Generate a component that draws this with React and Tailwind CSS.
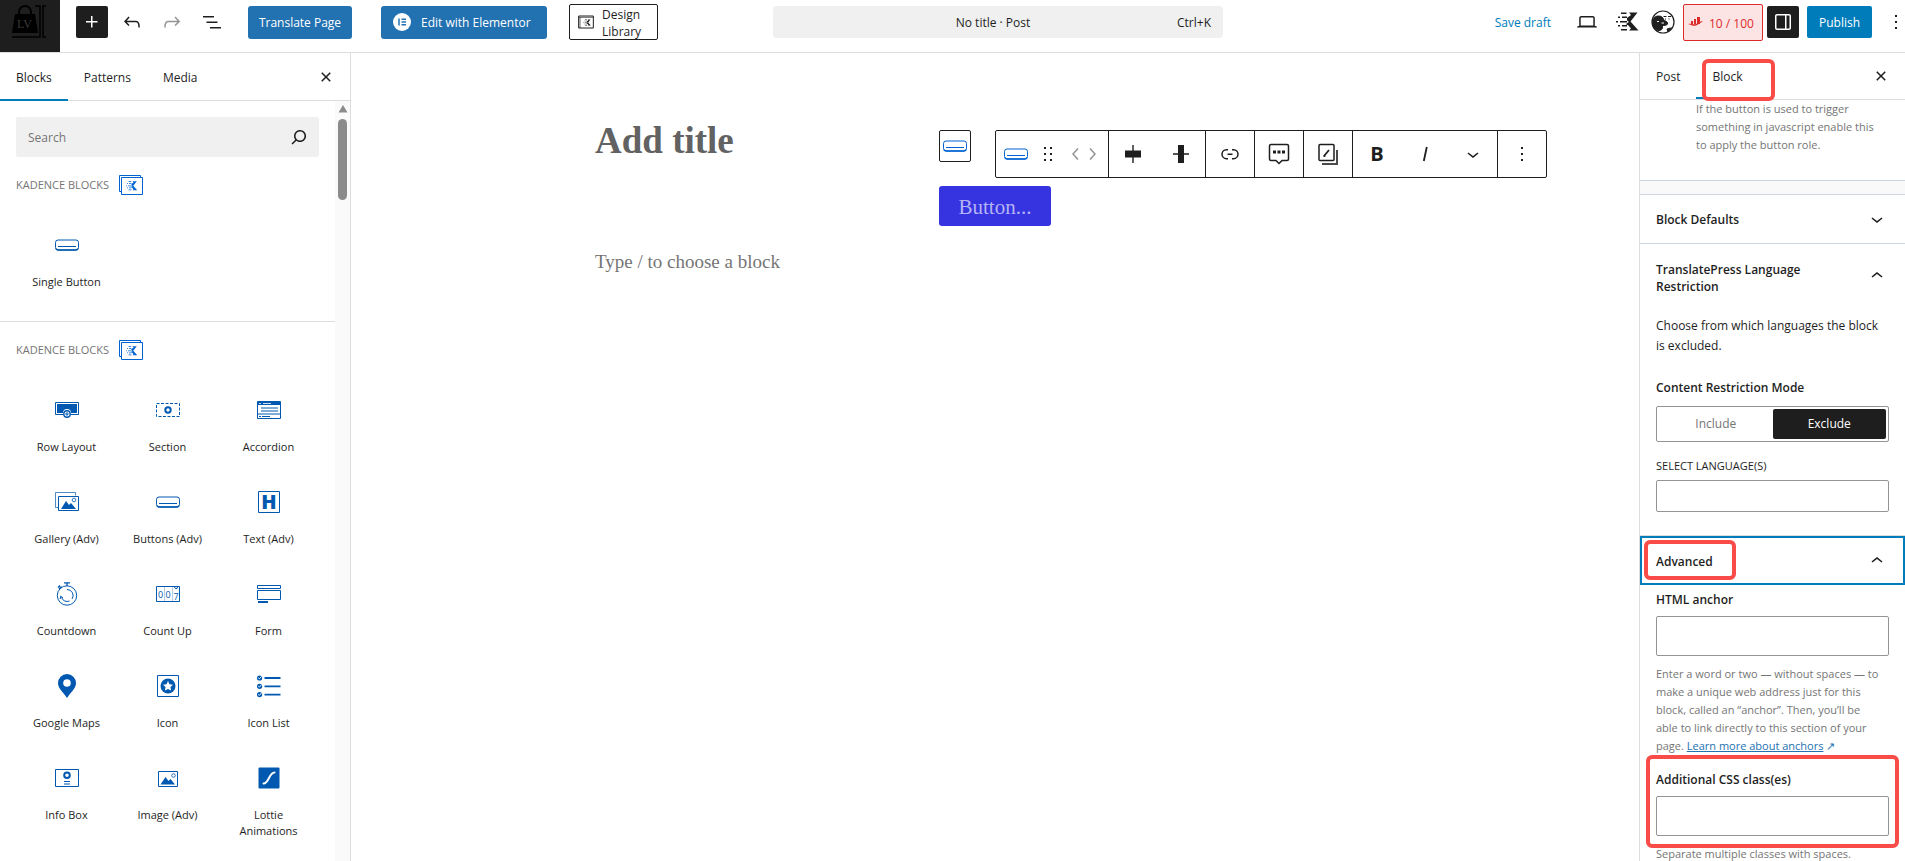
import { useState } from 'react';

const paths = {
  plus: 'M11 12.5V17.5H12.5V12.5H17.5V11H12.5V6H11V11H6V12.5H11Z',
  undo: 'M18.3 11.7c-.6-.6-1.4-.9-2.3-.9H6.7l2.9-3.3-1.1-1-4.5 5L8.5 16l1-1-2.7-2.7H16c.5 0 .9.2 1.3.5 1 1 1 3.4 1 4.5v.3h1.5v-.2c0-1.5 0-4.3-1.5-5.7z',
  redo: 'M15.6 6.5l-1.1 1 2.9 3.3H8c-.9 0-1.7.3-2.3.9-1.4 1.5-1.4 4.2-1.4 5.6v.2h1.5v-.3c0-1.1 0-3.5 1-4.5.3-.3.7-.5 1.3-.5h9.2L14.5 15l1.1 1.1 4.6-4.6-4.6-5z',
  list: 'M3 6h11v1.5H3V6Zm3.5 5.5h11V13h-11v-1.5ZM21 17H10v1.5h11V17Z',
  close: 'M12 13.06l3.712 3.713 1.061-1.06L13.061 12l3.712-3.712-1.06-1.06L12 10.938 8.288 7.227l-1.061 1.06L10.939 12l-3.712 3.712 1.06 1.061L12 13.061z',
  search: 'M13 5c-3.3 0-6 2.7-6 6 0 1.4.5 2.7 1.3 3.7l-3.8 3.8 1.1 1.1 3.8-3.8c1 .8 2.3 1.3 3.7 1.3 3.3 0 6-2.7 6-6S16.3 5 13 5zm0 10.5c-2.5 0-4.5-2-4.5-4.5s2-4.5 4.5-4.5 4.5 2 4.5 4.5-2 4.5-4.5 4.5z',
  more: 'M13 19h-2v-2h2v2zm0-6h-2v-2h2v2zm0-6h-2V5h2v2z',
  down: 'M17.5 11.6L12 16l-5.5-4.4.9-1.2L12 14l4.5-3.6 1 1.2z',
  up: 'M6.5 12.4L12 8l5.5 4.4-.9 1.2L12 10l-4.5 3.6-1-1.2z',
  left: 'M14.6 7l-1.2-1L8 12l5.4 6 1.2-1-4.6-5z',
  right: 'M10.6 6L9.4 7l4.6 5-4.6 5 1.2 1 5.4-6z',
  drag: 'M8 7h2V5H8v2zm0 6h2v-2H8v2zm0 6h2v-2H8v2zm6-14v2h2V5h-2zm0 8h2v-2h-2v2zm0 6h2v-2h-2v2z',
  link: 'M10 17.389H8.444A5.194 5.194 0 1 1 8.444 7H10v1.5H8.444a3.694 3.694 0 0 0 0 7.389H10v1.5ZM14 7h1.556a5.194 5.194 0 0 1 0 10.39H14v-1.5h1.556a3.694 3.694 0 0 0 0-7.39H14V7Zm-4.5 6h5v-1.5h-5V13Z',
  drawer: 'M18 4H6c-1.1 0-2 .9-2 2v12c0 1.1.9 2 2 2h12c1.1 0 2-.9 2-2V6c0-1.1-.9-2-2-2zm-4 14.5H6c-.3 0-.5-.2-.5-.5V6c0-.3.2-.5.5-.5h8v13zm4.5-.5c0 .3-.2.5-.5.5h-2.5v-13H18c.3 0 .5.2.5.5v12z',
  laptop: 'M20.5 16h-.7V8c0-1.1-.9-2-2-2H6.2c-1.1 0-2 .9-2 2v8h-.7c-.8 0-1.5.7-1.5 1.5h20c0-.8-.7-1.5-1.5-1.5zM5.7 8c0-.3.2-.5.5-.5h11.6c.3 0 .5.2.5.5v7.6H5.7V8z',
  alignMiddle: 'M4 8.5h7.3V3h1.4v5.5H20v7h-7.3V21h-1.4v-5.5H4z',
  alignStretch: 'M9 3h6v8.3h5v1.4h-5V21H9v-8.3H4v-1.4h5z',
};

const Icon = ({ name, className = 'size-6' }) => (
  <svg viewBox="0 0 24 24" fill="currentColor" className={`shrink-0 ${className}`} aria-hidden="true">
    <path d={paths[name]} />
  </svg>
);

const Svg = ({ children, className = 'size-6', ...rest }) => (
  <svg viewBox="0 0 24 24" fill="none" stroke="currentColor" className={`shrink-0 overflow-visible ${className}`} aria-hidden="true" {...rest}>
    {children}
  </svg>
);

const KadenceMark = () => (
  <g fill="currentColor" stroke="none">
    <path d="M14 2.500h8.500L15.500 11.500 23.500 20.500H14l2-2-3-3.500h-1.500v-1.500l2.500-1.500-2-1.500V8l4-3z" />
    <path d="M6 2.500h5.500V4H6zM3 6.500h2V8H3zM7 6.500h5V8H7zM1 11h2v1.500H1zM5 11h7v1.500H5zM3 15h2v1.500H3zM7 15h5v1.500H7zM6 19h6v1.500H6z" />
  </g>
);

const KadenceIcon = () => (
  <Svg className="size-6 text-[#0063d1]">
    <path d="M2.5 18.5h-2v-16h21v2" />
    <path d="M2.5 4.5h21v17h-21z" />
    <svg x="6" y="7" width="13" height="12" viewBox="0 0 24 24"><KadenceMark /></svg>
  </Svg>
);

const ButtonIcon = ({ className }) => (
  <Svg className={className}>
    <rect x=".5" y="7" width="23" height="10" rx="2.5" />
    <path d="M1 15.5c.4 1.2 1.200 1.500 2.500 1.500h17c1.300 0 2.100-.3 2.500-1.500" strokeWidth="1.500" />
    <path d="M3 13.500h18" />
  </Svg>
);

const blockIcons = {
  row: (
    <Svg>
      <path d="M.5 4.500h23v12h-23z" />
      <path d="M2 6h20v9h-6a4 4 0 0 0-8 0H2z" fill="currentColor" stroke="none" />
      <circle cx="12" cy="16" r="3.200" strokeWidth="1.400" fill="white" />
      <path d="M12 14.200v3.600M10.200 16h3.600" />
    </Svg>
  ),
  section: (
    <Svg>
      <rect x=".5" y="5.500" width="23" height="13" strokeDasharray="3 1.500" />
      <circle cx="12" cy="12" r="2.700" strokeWidth="2" />
    </Svg>
  ),
  accordion: (
    <Svg>
      <path d="M.5 3.500h23v17H.5zM.5 16h23" />
      <path d="M1 4h22v3H1z" fill="currentColor" stroke="none" />
      <path d="M2 5.500h2M6 5.500h8" stroke="white" strokeWidth=".8" />
      <path d="M4 10h17M4 13h17M2 18.500h2M5 18.500h8" />
    </Svg>
  ),
  gallery: (
    <Svg>
      <path d="M3 17.500H.5v-15h20v3" opacity=".7" />
      <path d="M3.500 6.500h20v14h-20z" />
      <path d="M6 19l5-8 3 4 2-2 5 6z" fill="currentColor" stroke="none" />
      <circle cx="19" cy="10" r="1.800" strokeWidth=".8" />
    </Svg>
  ),
  buttons: <ButtonIcon />,
  text: (
    <Svg>
      <path d="M1.500 1.500h21v21h-21z" />
      <text x="12" y="19" textAnchor="middle" fill="currentColor" stroke="none" className="text-[20px] font-extrabold">H</text>
    </Svg>
  ),
  countdown: (
    <Svg>
      <circle cx="12" cy="13.500" r="9.700" />
      <path d="M9 .8h6M12 1v3M3 5.500l2-2M4 7l2.500-2.500" strokeWidth="1.300" />
      <path d="M12 7.500a6 6 0 0 1 5 9.500M6.500 15.500a6 6 0 0 0 8 3.500" />
      <path d="M5.200 17l.5-2.800 2.300 1.600" />
    </Svg>
  ),
  countup: (
    <Svg>
      <path d="M.5 4.500h23v15H.5z" />
      <path d="M8.500 5v14M16.500 5v14" opacity=".3" />
      <path d="M18.500 5l1 1.500h1.500l.5-1.500" />
      <g fill="currentColor" stroke="none" className="text-[9px]">
        <text x="2" y="15.500">0</text>
        <text x="9.500" y="15.500">0</text>
        <text x="17.500" y="18">7</text>
      </g>
    </Svg>
  ),
  form: (
    <Svg>
      <path d="M.5 3.500h23v3H.5zM.5 8.500h23v9H.5z" />
      <path d="M1 20h10" strokeWidth="2" />
    </Svg>
  ),
  maps: (
    <Svg>
      <path fillRule="evenodd" fill="currentColor" stroke="none" d="M12 0a9 9 0 0 0-9 9c0 6 5.500 9 9 15 3.500-6 9-9 9-15a9 9 0 0 0-9-9zm0 5.200a3.800 3.800 0 1 1 0 7.600 3.800 3.800 0 0 1 0-7.600z" />
    </Svg>
  ),
  icon: (
    <Svg>
      <path d="M1.500 1.500h21v21h-21z" />
      <circle cx="12" cy="12" r="7.500" fill="currentColor" stroke="none" />
      <path d="M12 7l1.500 3.200 3.500.5-2.500 2.400.6 3.400-3.100-1.600-3.100 1.600.6-3.400L7 10.700l3.500-.5z" fill="white" stroke="none" />
    </Svg>
  ),
  iconlist: (
    <Svg>
      <path d="M7.500 4h16M7.500 12.300h16M7.500 20.600h16" strokeWidth="1.800" />
      <g fill="currentColor" stroke="none"><circle cx="2.600" cy="4" r="2.600" /><circle cx="2.600" cy="12.300" r="2.600" /><circle cx="2.600" cy="20.600" r="2.600" /></g>
      <path d="M1.200 3.800l1.200 1 2.200-2.500M1.200 12.100l1.200 1 2.200-2.500M1.200 20.400l1.200 1 2.200-2.500" stroke="white" strokeWidth=".9" />
    </Svg>
  ),
  infobox: (
    <Svg>
      <path d="M.5 3.500h23v17H.5z" />
      <circle cx="12" cy="9.300" r="2.800" strokeWidth="2" />
      <path d="M9 15.500h6M9 18h6" />
    </Svg>
  ),
  image: (
    <Svg>
      <path d="M2.500 5.500h19v15h-19z" />
      <path d="M4.500 18.500l5-7.500 3 4 2-2 4.500 5.500z" fill="currentColor" stroke="none" />
      <circle cx="17.500" cy="9.500" r="1.800" strokeWidth=".8" />
    </Svg>
  ),
  lottie: (
    <Svg>
      <rect x="1.500" y="1.500" width="21" height="21" rx="1" fill="currentColor" stroke="none" />
      <path d="M6.500 17.500c5.500 0 5.500-11 11-11" stroke="white" strokeWidth="2" strokeLinecap="round" />
    </Svg>
  ),
};

const blocks = [
  { icon: 'row', name: 'Row Layout' },
  { icon: 'section', name: 'Section' },
  { icon: 'accordion', name: 'Accordion' },
  { icon: 'gallery', name: 'Gallery (Adv)' },
  { icon: 'buttons', name: 'Buttons (Adv)' },
  { icon: 'text', name: 'Text (Adv)' },
  { icon: 'countdown', name: 'Countdown' },
  { icon: 'countup', name: 'Count Up' },
  { icon: 'form', name: 'Form' },
  { icon: 'maps', name: 'Google Maps' },
  { icon: 'icon', name: 'Icon' },
  { icon: 'iconlist', name: 'Icon List' },
  { icon: 'infobox', name: 'Info Box' },
  { icon: 'image', name: 'Image (Adv)' },
  { icon: 'lottie', name: 'Lottie Animations' },
];

const Header = () => (
  <header className="flex h-[53px] shrink-0 items-start border-b border-[#ddd]">
    <a href="#" aria-label="View posts" className="flex h-[52px] w-[60px] shrink-0 items-center justify-center bg-[#1e1e1e] pb-2">
      <svg viewBox="0 0 36 34" className="h-[34px] w-9 text-black" fill="currentColor" aria-hidden="true">
        <path d="M3 9h20l3 19H0z" />
        <path d="M7 11V7a6 6 0 0 1 12 0v4" fill="none" stroke="currentColor" strokeWidth="2" />
        <path d="M0 32h28V1h-5M34 1h-3v31h3" fill="none" stroke="currentColor" strokeWidth="1.500" />
        <text x="5" y="23" fill="#3a3a3a" className="font-['Liberation_Serif',serif] text-[12px]">LV</text>
      </svg>
    </a>
    <div className="flex h-11 flex-1 items-center pl-4">
      <button aria-label="Block inserter" className="mr-2 flex size-8 items-center justify-center rounded-xs bg-[#1e1e1e] text-white"><Icon name="plus" /></button>
      <button aria-label="Undo" className="flex w-8 justify-center"><Icon name="undo" /></button>
      <button aria-label="Redo" className="ml-2 flex w-8 justify-center text-[#949494]"><Icon name="redo" /></button>
      <button aria-label="Document overview" className="ml-2 flex w-8 justify-center"><Icon name="list" /></button>
      <button className="ml-5 h-[33px] w-[104px] rounded-[3px] bg-[#2271b1] pt-0.5 text-white">Translate Page</button>
      <button className="ml-[29px] flex h-[33px] w-[166px] items-center gap-2.5 rounded-[3px] bg-[#2271b1] pl-3 text-white">
        <svg viewBox="0 0 18 18" className="size-[18px]" aria-hidden="true">
          <circle cx="9" cy="9" r="9" fill="white" />
          <path d="M6 5.500v7M8.500 6.200H13M8.500 9H13M8.500 11.800H13" stroke="#2271b1" strokeWidth="1.500" />
        </svg>
        <span className="pt-0.5">Edit with Elementor</span>
      </button>
      <button className="ml-[22px] flex h-9 w-[89px] items-center gap-2 rounded-xs border border-[#1e1e1e] pl-2 text-left leading-[17px]">
        <Svg className="size-4">
          <path d="M1 21V3h22v18z" strokeWidth="1.500" /><path d="M1 5h22M3 5v16" />
          <svg x="7" y="7" width="13" height="12" viewBox="0 0 24 24"><KadenceMark /></svg>
        </Svg>
        <span className="pt-0.5">Design<br />Library</span>
      </button>
      <button className="ml-[115px] flex h-8 w-[450px] items-center rounded-sm bg-[#f0f0f0] px-3 pt-0.5">
        <span className="flex-1 pl-6 text-center">No title · Post</span>
        <span>Ctrl+K</span>
      </button>
      <div className="ml-auto flex items-center">
        <button className="mr-6 pt-0.5 text-[#007cba]">Save draft</button>
        <button aria-label="View" className="mr-4"><Icon name="laptop" /></button>
        <button aria-label="Kadence Blocks controls" className="mr-3"><Svg><KadenceMark /></Svg></button>
        <button aria-label="Site assistant" className="mr-2">
          <Svg>
            <circle cx="12" cy="12" r="11" strokeWidth="1.200" />
            <path d="M1.500 13C1.500 8.500 4 6 7.500 6s5 2 5.500 4.500c2.500.5 4 2 3.500 3.500-.6 1.500-3 1.500-5.500 1.500 1.500 2 0 5-3 5-4-.5-6.500-3.500-6.500-7.500z" fill="currentColor" />
            <path d="M16 19c2.500-1 4.500-1 4.500-1l-3.500 3.500z" fill="currentColor" />
            <path d="M6 11.500h2M10.500 13h2.500" stroke="white" />
            <path d="M12.500 6.500h3M17 6.500h3M14 9h1M17.500 9h1" />
          </Svg>
        </button>
        <button className="mr-1 flex h-[37px] w-20 items-center gap-1.5 rounded-xs border border-[#dc2b2b] bg-[#fde4e4] pl-1 text-[#dc2b2b]">
          <svg viewBox="0 0 15 12" className="h-3 w-[15px]" fill="currentColor" aria-hidden="true">
            <path d="M3 5h2v3H3zM6 3h2v5H6zM9 1h3v7H9z" /><path d="M0 8c3-1 5 1 8 0s4-3 7-3c-2 1-3 3-6 4-3 2-5 0-9-1z" />
          </svg>
          <span className="pt-1">10 / 100</span>
        </button>
        <button aria-label="Settings" className="mr-2 flex size-8 items-center justify-center rounded-xs bg-[#1e1e1e] text-white"><Icon name="drawer" /></button>
        <button className="mr-3 h-8 w-[65px] rounded-xs bg-[#007cba] pt-0.5 text-white">Publish</button>
        <button aria-label="Options" className="-mr-[3px]"><Icon name="more" /></button>
      </div>
    </div>
  </header>
);

const BlockItem = ({ icon, name }) => (
  <button className="flex h-[92px] flex-col items-center gap-[17px] px-2 pt-4 text-[11px] leading-4">
    <span className="text-[#0058b0]">{blockIcons[icon]}</span>
    {name}
  </button>
);

const BlockSection = ({ items }) => (
  <section className="border-b border-[#ddd] px-4 py-3 last:border-b-0">
    <h2 className="mb-4 flex h-8 items-center gap-2.5 text-[11px] font-medium text-[#757575] uppercase">
      Kadence Blocks <KadenceIcon />
    </h2>
    <div className="grid grid-cols-3">
      {items.map((item) => <BlockItem key={item.name} {...item} />)}
    </div>
  </section>
);

const Inserter = () => (
  <aside className="flex w-[351px] shrink-0 flex-col border-r border-[#ddd]">
    <div className="flex h-12 shrink-0 items-center border-b border-[#ddd]">
      <button className="h-12 border-b-2 border-[#007cba] px-4 pt-1">Blocks</button>
      <button className="h-12 px-4 pt-0.5">Patterns</button>
      <button className="h-12 px-4 pt-0.5">Media</button>
      <button aria-label="Close block inserter" className="mr-3 ml-auto"><Icon name="close" /></button>
    </div>
    <div className="flex min-h-0 flex-1">
      <div className="flex-1 overflow-hidden">
        <label className="mx-4 mt-4 flex h-10 items-center rounded-xs bg-[#f0f0f0] pr-2">
          <input type="text" placeholder="Search" aria-label="Search" className="min-w-0 flex-1 px-3 pt-0.5 outline-none placeholder:text-[#757575]" />
          <Icon name="search" />
        </label>
        <BlockSection items={[{ icon: 'buttons', name: 'Single Button' }]} />
        <BlockSection items={blocks} />
      </div>
      <div className="flex w-[15px] flex-col items-center bg-[#fafafa] pt-1">
        <svg viewBox="0 0 10 8" className="h-2 w-[10px]" aria-hidden="true"><path d="M5 0l4.500 7.500h-9z" fill="#8b8b8b" /></svg>
        <div className="mt-1.5 h-[81px] w-[9px] rounded-full bg-[#8b8b8b]" />
      </div>
    </div>
  </aside>
);

const ToolGroup = ({ children }) => <div className="flex h-full items-center border-r border-[#1e1e1e] last:border-r-0">{children}</div>;

const Tool = ({ label, children }) => (
  <button aria-label={label} className="flex h-full w-12 items-center justify-center">{children}</button>
);

const Toolbar = () => (
  <div role="toolbar" aria-label="Block tools" className="absolute -top-14 left-14 flex h-12 items-center rounded-xs border border-[#1e1e1e] bg-white">
    <ToolGroup>
      <button aria-label="Single Button" className="ml-2 text-[#0063d1]"><ButtonIcon /></button>
      <button aria-label="Drag" className="ml-2"><Icon name="drag" /></button>
      <button aria-label="Move left" className="ml-2 flex w-4 justify-center text-[#949494]"><Icon name="left" /></button>
      <button aria-label="Move right" className="mr-2 flex w-4 justify-center text-[#949494]"><Icon name="right" /></button>
    </ToolGroup>
    <ToolGroup>
      <Tool label="Align middle"><Icon name="alignMiddle" /></Tool>
      <Tool label="Align stretch"><Icon name="alignStretch" /></Tool>
    </ToolGroup>
    <ToolGroup><Tool label="Link"><Icon name="link" /></Tool></ToolGroup>
    <ToolGroup>
      <Tool label="Tooltip">
        <Svg strokeWidth="1.500">
          <path d="M4 2.500h16a1.500 1.500 0 0 1 1.500 1.500v13a1.500 1.500 0 0 1-1.500 1.500h-5l-3 3-3-3H4A1.500 1.500 0 0 1 2.500 17V4A1.500 1.500 0 0 1 4 2.500z" />
          <path d="M6 10h3M10.500 10h3M15 10h3" strokeWidth="3" />
        </Svg>
      </Tool>
    </ToolGroup>
    <ToolGroup>
      <Tool label="Copy styles">
        <Svg strokeWidth="1.500">
          <rect x="3" y="2.500" width="15" height="16" rx="1" />
          <path d="M21 8v14H6" strokeWidth="2" opacity=".8" />
          <path d="M8 14l5-6M7.500 14.500l2-1" strokeWidth="1.800" />
        </Svg>
      </Tool>
    </ToolGroup>
    <ToolGroup>
      <Tool label="Bold"><span className="text-xl font-bold">B</span></Tool>
      <Tool label="Italic"><Svg strokeWidth="1.800"><path d="M13.800 5l-3 14" /></Svg></Tool>
      <Tool label="More formatting"><Icon name="down" /></Tool>
    </ToolGroup>
    <ToolGroup><Tool label="Options"><Icon name="more" /></Tool></ToolGroup>
  </div>
);

const Canvas = () => (
  <main className="min-w-0 flex-1 px-6 pt-16">
    <div className="mx-auto max-w-[800px] font-['Liberation_Serif',serif]">
      <h1 className="text-[37px] leading-12 font-bold text-[#626262]">Add title</h1>
      <div className="relative mx-auto mt-[21px] w-28 font-['Open_Sans',sans-serif]">
        <button aria-label="Select parent block" className="absolute -top-14 left-0 flex size-8 items-center justify-center rounded-xs border border-[#1e1e1e] text-[#0063d1]">
          <ButtonIcon />
        </button>
        <Toolbar />
        <button className="block h-10 w-28 rounded-[3px] bg-[#3633e1] pt-0.5 font-['Liberation_Serif',serif] text-[21px] text-[#b4b3f4]">Button...</button>
      </div>
      <p className="mt-6 text-[19px] leading-6 text-[#757575]">Type / to choose a block</p>
    </div>
  </main>
);

// red marker drawn over the panel
const Marker = ({ className }) => (
  <div className={`pointer-events-none absolute rounded-md border-4 border-[#f94c48] ${className}`} />
);

const Field = ({ id, label }) => (
  <>
    <label htmlFor={id} className="block leading-5 font-semibold">{label}</label>
    <input id={id} type="text" className="mt-1.5 block h-10 w-full rounded-xs border border-[#949494] px-2" />
  </>
);

const Sidebar = () => {
  const [mode, setMode] = useState('Exclude');

  return (
    <aside className="flex w-[266px] shrink-0 flex-col overflow-hidden border-l border-[#ddd]">
      <div className="flex h-[47px] shrink-0 items-center border-b border-[#ddd]">
        <button className="h-[46px] px-4 pt-0.5">Post</button>
        <div className="relative">
          <button className="h-[46px] border-b-2 border-[#007cba] px-4 pt-1">Block</button>
          <Marker className="top-1.5 left-1.5 h-[42px] w-[73px]" />
        </div>
        <button aria-label="Close settings" className="mr-3 ml-auto"><Icon name="close" /></button>
      </div>

      <p className="h-20 shrink-0 pr-5 pl-14 text-[11px] leading-[18px] text-[#757575]">
        If the button is used to trigger something in javascript enable this to apply the button role.
      </p>
      <div className="h-[15px] shrink-0 border-y border-[#ccd5e0] bg-[#f9f9f9]" />

      <button className="flex h-[49px] shrink-0 items-center justify-between border-b border-[#ccd5e0] px-4 font-semibold">
        <span className="pt-0.5">Block Defaults</span> <Icon name="down" />
      </button>

      <section className="shrink-0 border-b border-[#ddd] px-4 pb-[23px]">
        <button className="flex h-16 w-full items-center justify-between text-left leading-[17px] font-semibold">
          <span className="w-40 pt-1">TranslatePress Language Restriction</span> <Icon name="up" />
        </button>
        <p className="mt-2 leading-5">Choose from which languages the block is excluded.</p>
        <h3 className="mt-[22px] leading-5 font-semibold">Content Restriction Mode</h3>
        <div className="mt-2 flex h-9 rounded-xs border border-[#949494] p-0.5">
          {['Include', 'Exclude'].map((m) => (
            <button
              key={m}
              onClick={() => setMode(m)}
              className={mode === m ? 'flex-1 rounded-xs bg-[#1e1e1e] text-white' : 'flex-1 text-[#757575]'}
            >
              {m}
            </button>
          ))}
        </div>
        <label htmlFor="languages" className="mt-4 block text-[11px] leading-4 font-medium uppercase">Select language(s)</label>
        <input id="languages" type="text" className="mt-1.5 block h-8 w-full rounded-xs border border-[#949494] px-2" />
      </section>

      <div className="relative shrink-0">
        <button className="flex h-[49px] w-full items-center justify-between border-2 border-[#007cba] px-3.5 font-semibold">
          <span className="pt-0.5">Advanced</span> <Icon name="up" />
        </button>
        <Marker className="top-1 left-1 h-10 w-[92px]" />
      </div>

      <section className="shrink-0 px-4 pt-[5px]">
        <Field id="anchor" label="HTML anchor" />
        <p className="mt-[9px] pr-1.5 text-[11px] leading-[18px] text-[#757575]">
          Enter a word or two — without spaces — to make a unique web address just for this block, called an “anchor”. Then, you’ll be able to link directly to this section of your page.{' '}
          <a href="#" className="text-[#2271b1] underline">Learn more about anchors</a> <span className="text-[#2271b1]">↗</span>
        </p>
        <div className="relative pt-[15px]">
          <Field id="css-classes" label="Additional CSS class(es)" />
          <Marker className="-inset-x-2.5 top-0 -bottom-3" />
        </div>
        <p className="mt-[9px] text-[11px] leading-[18px] text-[#757575]">Separate multiple classes with spaces.</p>
      </section>
    </aside>
  );
};

const App = () => (
  <div className="flex h-screen flex-col overflow-hidden bg-white font-['Open_Sans',sans-serif] text-xs text-[#1e1e1e]">
    <Header />
    <div className="flex min-h-0 flex-1">
      <Inserter />
      <Canvas />
      <Sidebar />
    </div>
  </div>
);

export default App;
